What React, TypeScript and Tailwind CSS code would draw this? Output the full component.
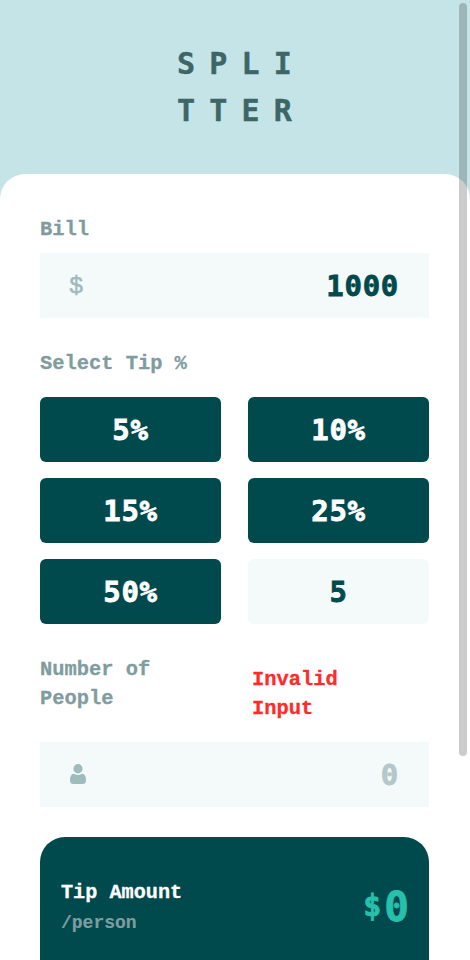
const tips = ["5%", "10%", "15%", "25%", "50%"];

function PersonIcon() {
  return (
    <svg width="16" height="20" viewBox="0 0 16 20" fill="#9ebbbd" aria-hidden="true" className="relative -top-px">
      <ellipse cx="8" cy="4.7" rx="4.6" ry="4.7" />
      <path d="M3.500 9.800C1.300 10 0 12.700 0 16.200 0 18.900 1.300 20 3.500 20h9c2.200 0 3.500-1.100 3.500-3.800 0-3.500-1.300-6.200-3.500-6.400-.9 0-1.800 1.100-4.500 1.100S4.400 9.800 3.500 9.800Z" />
    </svg>
  );
}

export default function App() {
  return (
    <div className="relative h-[960px] w-[470px] overflow-hidden bg-[#c5e4e7] font-['Liberation_Mono',monospace] font-bold">
      <header className="flex h-[174px] flex-col pt-[40px] pl-[177px] font-['DejaVu_Sans_Mono',monospace] text-[30px] leading-[47px] tracking-[14.2px] text-[#3d6666] [-webkit-text-stroke:0.4px_#3d6666]">
        <span>SPLI</span>
        <span>TTER</span>
      </header>

      <main className="flex h-[786px] flex-col rounded-t-[25px] bg-white pt-[41px] pr-[41px] pl-10">
        <label className="h-[38px] text-[20.4px] leading-[30px] text-[#7f9c9f] [-webkit-text-stroke:0.3px_#7f9c9f]">Bill</label>
        <div className="flex h-[65px] shrink-0 items-center justify-between bg-[#f4fafa] pr-[30px] pl-[29px]">
          <span className="pt-0.5 text-[24px] font-normal text-[#9ebbbd] [-webkit-text-stroke:0.6px_#9ebbbd]">$</span>
          <span className="pt-0.5 font-['DejaVu_Sans_Mono',monospace] text-[29px] tracking-[0.7px] text-[#00494d] [-webkit-text-stroke:0.8px_#00494d]">1000</span>
        </div>

        <h2 className="mt-[31px] h-[48px] shrink-0 text-[20.4px] leading-[30px] text-[#7f9c9f] [-webkit-text-stroke:0.3px_#7f9c9f]">Select Tip %</h2>
        <div className="grid shrink-0 grid-cols-2 gap-x-[27px] gap-y-4 font-['DejaVu_Sans_Mono',monospace] text-[29px] tracking-[0.7px]">
          {tips.map((tip) => (
            <button key={tip} className="flex h-[65px] items-center justify-center rounded-[6px] bg-[#00494d] pt-[3px] text-white [-webkit-text-stroke:0.8px_white]">
              {tip}
            </button>
          ))}
          <div className="flex h-[65px] items-center justify-center rounded-[6px] bg-[#f4fafa] pt-[3px] text-[#00494d] [-webkit-text-stroke:0.8px_#00494d]">5</div>
        </div>

        <div className="mt-[31px] flex h-[87px] shrink-0 text-[20.4px] leading-[29px]">
          <label className="w-[212px] text-[#7f9c9f] [-webkit-text-stroke:0.3px_#7f9c9f]">Number of<br />People</label>
          <p className="pt-[10px] text-[#ff2a2a] [-webkit-text-stroke:0.3px_#ff2a2a]">Invalid<br />Input</p>
        </div>
        <div className="flex h-[65px] shrink-0 items-center justify-between bg-[#f4fafa] pr-[30px] pl-[30px]">
          <PersonIcon />
          <span className="pt-[3px] font-['DejaVu_Sans_Mono',monospace] text-[29px] tracking-[0.7px] text-[#b2c8ca] [-webkit-text-stroke:0.8px_#b2c8ca]">0</span>
        </div>

        <section className="mt-[30px] flex h-[123px] shrink-0 items-start justify-between rounded-t-[25px] bg-[#00494d] pt-[41px] pr-5 pl-[21px]">
          <div className="flex flex-col leading-[30px]">
            <span className="text-[20.2px] text-white [-webkit-text-stroke:0.3px_white]">Tip Amount</span>
            <span className="text-[18px] text-[#7f9c9f] [-webkit-text-stroke:0.2px_#7f9c9f]">/person</span>
          </div>
          <div className="flex items-center font-['DejaVu_Sans_Mono',monospace] leading-[58px] text-[#26c0ab] [-webkit-text-stroke:0.8px_#26c0ab]">
            <span className="relative -top-px text-[30px] tracking-[3px]">$</span>
            <span className="text-[41px]">0</span>
          </div>
        </section>
      </main>

      <div className="absolute top-[3px] left-[459px] h-[753px] w-2 rounded-full bg-black/20" />
    </div>
  );
}
